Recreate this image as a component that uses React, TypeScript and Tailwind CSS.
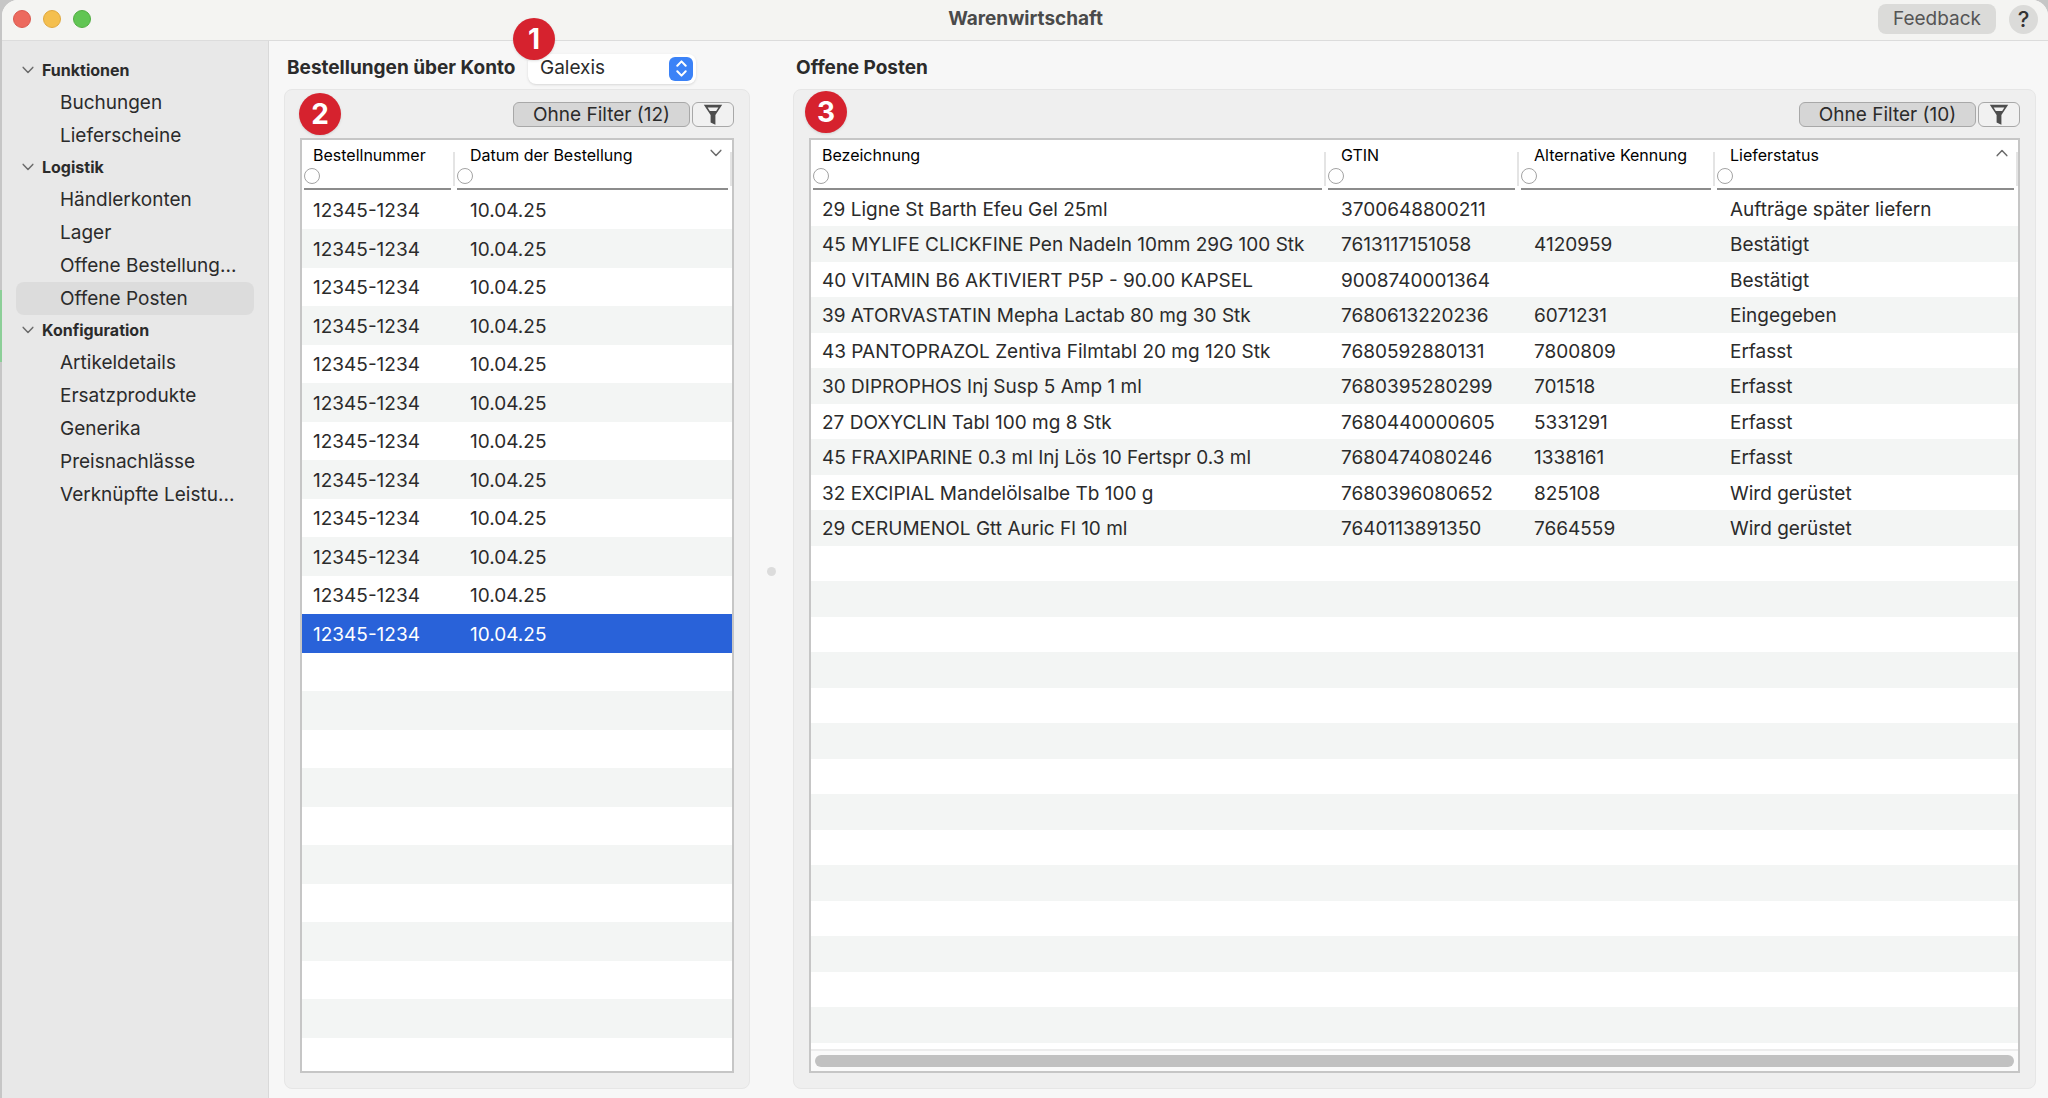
import type { ReactNode } from 'react';

const navigation = [
  {
    title: 'Funktionen',
    items: ['Buchungen', 'Lieferscheine']
  },
  {
    title: 'Logistik',
    items: ['Händlerkonten', 'Lager', 'Offene Bestellung...', 'Offene Posten']
  },
  {
    title: 'Konfiguration',
    items: ['Artikeldetails', 'Ersatzprodukte', 'Generika', 'Preisnachlässe', 'Verknüpfte Leistu...']
  }
];

const orders = Array.from({ length: 12 }, () => ['12345-1234', '10.04.25']);

const openItems = [
  ['29 Ligne St Barth Efeu Gel 25ml', '3700648800211', '', 'Aufträge später liefern'],
  ['45 MYLIFE CLICKFINE Pen Nadeln 10mm 29G 100 Stk', '7613117151058', '4120959', 'Bestätigt'],
  ['40 VITAMIN B6 AKTIVIERT P5P - 90.00 KAPSEL', '9008740001364', '', 'Bestätigt'],
  ['39 ATORVASTATIN Mepha Lactab 80 mg 30 Stk', '7680613220236', '6071231', 'Eingegeben'],
  ['43 PANTOPRAZOL Zentiva Filmtabl 20 mg 120 Stk', '7680592880131', '7800809', 'Erfasst'],
  ['30 DIPROPHOS Inj Susp 5 Amp 1 ml', '7680395280299', '701518', 'Erfasst'],
  ['27 DOXYCLIN Tabl 100 mg 8 Stk', '7680440000605', '5331291', 'Erfasst'],
  ['45 FRAXIPARINE 0.3 ml Inj Lös 10 Fertspr 0.3 ml', '7680474080246', '1338161', 'Erfasst'],
  ['32 EXCIPIAL Mandelölsalbe Tb 100 g', '7680396080652', '825108', 'Wird gerüstet'],
  ['29 CERUMENOL Gtt Auric Fl 10 ml', '7640113891350', '7664559', 'Wird gerüstet']
];

const Chevron = ({ up = false, bold = false, className = '' }: { up?: boolean; bold?: boolean; className?: string }) => (
  <svg viewBox="0 0 12 8" fill="none" stroke="currentColor" strokeLinecap="round" strokeLinejoin="round" className={className} aria-hidden="true">
    <path d={up ? 'M1.2 6.6 6 1.6l4.8 5' : 'M1.2 1.4 6 6.4l4.8-5'} strokeWidth={bold ? 2.3 : 1.5} />
  </svg>
);

const Badge = ({ children, className }: { children: ReactNode; className: string }) => (
  <span className={`absolute z-10 flex size-[42px] items-center justify-center rounded-full bg-[#d6222e] text-[28px] leading-none font-bold text-white shadow-sm ${className}`}>
    {children}
  </span>
);

const FilterBar = ({ count }: { count: number }) => (
  <div className="mb-[11px] flex justify-end gap-[2px]">
    <button className="h-[25px] w-[177px] rounded-md border border-[#a8a8a8] bg-[#d6d6d6] text-[19px] leading-[20px] text-[#2b2b2b]">
      Ohne Filter ({count})
    </button>
    <button aria-label="Filter" className="flex h-[25px] w-[42px] items-center justify-center rounded-md border border-[#a8a8a8] bg-[#f1f1f1]">
      <svg viewBox="0 0 20 21" className="h-[21px] w-5" aria-hidden="true">
        <path d="M.8.8h18.4L12.4 11v9.8l-4.8-2.4V11Z" fill="#4d4d4d" />
        <path d="M4.6 3.4h10.8l-2.2 3.6H6.8Z" fill="#f1f1f1" />
      </svg>
    </button>
  </div>
);

type Column = { label: string; width: string; sort?: 'up' | 'down' };

type GridProps = {
  name: string;
  columns: Column[];
  rows: string[][];
  total: number;
  rowClass: string;
  selected?: number;
};

const DataGrid = ({ name, columns, rows, total, rowClass, selected }: GridProps) => {
  // blank rows keep the stripes going down to the bottom of the list
  const filled = Array.from({ length: total }, (_, i) => rows[i] ?? columns.map(() => ''));

  return (
    <table aria-label={name} className="w-full table-fixed border-collapse text-left">
      <thead>
        <tr>
          {columns.map((column) => (
            <th key={column.label} scope="col" className={`group h-[51px] px-0 pt-0 pb-[1px] align-bottom font-normal text-black ${column.width}`}>
              <div className="flex items-end gap-[2px]">
                <div className="ml-[2px] h-[45px] min-w-0 flex-1 border-b-2 border-[#8c8c8c]">
                  <div className="flex h-[23px] items-start pl-[13px] group-first:pl-[9px]">
                    <span className="flex-1 text-[16px] leading-5">{column.label}</span>
                    {column.sort && <Chevron up={column.sort === 'up'} className="mt-1 mr-[6px] h-2 w-3 text-[#6b6b6b]" />}
                  </div>
                  <input type="radio" name={name} aria-label={`${column.label} filtern`} className="block size-4 appearance-none rounded-full border border-[#a3a3a3] bg-white" />
                </div>
                <span className="mb-1 h-[34px] w-[2px] bg-[#e4e4e4]" />
              </div>
            </th>
          ))}
        </tr>
      </thead>
      <tbody>
        {filled.map((row, index) => (
          <tr key={index} className={index === selected ? `${rowClass} bg-[#2962d9] text-white` : `${rowClass} text-[#2b2b2b] even:bg-[#f3f5f4]`}>
            {row.map((cell, i) => (
              <td key={i} className="truncate pt-[2px] pr-0 pb-0 pl-[15px] text-[19px] leading-6 first:pl-[11px]">
                {cell}
              </td>
            ))}
          </tr>
        ))}
      </tbody>
    </table>
  );
};

const Sidebar = () => (
  <nav className="w-[267px] shrink-0 border-r border-[#d9d9d9] bg-[#e8e8e8] px-[14px] pt-[14px] text-[#2b2b2b]">
    {navigation.map((group) => (
      <section key={group.title}>
        <h2 className="flex h-[31px] items-center gap-2 pb-[2px] pl-[6px] text-[16px] font-bold">
          <Chevron className="h-2 w-3 text-[#6b6b6b]" />
          {group.title}
        </h2>
        <ul>
          {group.items.map((item) => (
            <li key={item}>
              <a
                href="#"
                className={`flex h-[33px] items-center rounded-lg pt-[1px] pl-11 text-[19px] whitespace-nowrap ${item === 'Offene Posten' ? 'bg-[#dcdcdc]' : ''}`}
              >
                {item}
              </a>
            </li>
          ))}
        </ul>
      </section>
    ))}
  </nav>
);

const App = () => {
  return (
    <div className="flex h-screen bg-[#c6c6c6] font-['Inter','Liberation_Sans',sans-serif]">
      {/* Edge of the window behind */}
      <div className="flex w-[2px] flex-col">
        <div className="h-[290px]" />
        <div className="h-[72px] bg-[#8ccf98]" />
      </div>

      <div className="flex min-w-0 flex-1 flex-col overflow-hidden rounded-t-2xl bg-[#f7f7f7]">
        {/* Title bar */}
        <header className="grid h-[41px] shrink-0 grid-cols-3 items-center border-b border-[#dcdcdc] bg-[#f4f4f2] pr-[10px] pb-[2px] pl-[11px]">
          <div className="flex gap-3">
            <button aria-label="Schliessen" className="size-[18px] rounded-full border border-[#d95a50] bg-[#ec6a5e]" />
            <button aria-label="Minimieren" className="size-[18px] rounded-full border border-[#dfa83f] bg-[#f4bf4f]" />
            <button aria-label="Maximieren" className="size-[18px] rounded-full border border-[#52ad43] bg-[#61c554]" />
          </div>
          <h1 className="text-center text-[19px] font-bold text-[#4a4a4a]">Warenwirtschaft</h1>
          <div className="flex items-center justify-end gap-[13px]">
            <button className="h-[30px] w-[118px] rounded-lg bg-[#dbdbd9] text-[19px] text-[#555555]">Feedback</button>
            <button aria-label="Hilfe" className="size-[29px] rounded-full bg-[#dbdbd9] text-[22px] leading-none font-medium text-[#333333]">
              ?
            </button>
          </div>
        </header>

        <div className="flex min-h-0 flex-1">
          <Sidebar />

          <main className="flex min-w-0 flex-1 pr-3 pb-[9px] pl-[15px]">
            {/* Orders */}
            <section className="flex w-[466px] shrink-0 flex-col">
              <div className="flex h-12 items-center pt-[7px] pl-[3px]">
                <label htmlFor="account" className="w-[241px] text-[19px] font-bold whitespace-nowrap text-[#2b2b2b]">
                  Bestellungen über Konto
                </label>
                <div className="relative">
                  <select id="account" className="h-[30px] w-[168px] appearance-none rounded-lg bg-white pl-3 text-[19px] text-[#2b2b2b] shadow">
                    <option>Galexis</option>
                  </select>
                  <span className="pointer-events-none absolute top-[3px] right-[3px] flex size-6 flex-col items-center justify-center gap-[3px] rounded-md bg-[#3b82f7] text-white">
                    <Chevron up bold className="h-[7px] w-[11px]" />
                    <Chevron bold className="h-[7px] w-[11px]" />
                  </span>
                  <Badge className="-top-9 -left-[15px]">1</Badge>
                </div>
              </div>
              <div className="relative flex min-h-0 flex-1 flex-col rounded-lg border border-[#e6e6e6] bg-[#efefef] px-[15px] pt-3 pb-[15px]">
                <Badge className="top-[3px] left-[14px]">2</Badge>
                <FilterBar count={12} />
                <div className="min-h-0 flex-1 overflow-hidden border-2 border-[#c6c6c6] bg-white">
                  <DataGrid
                    name="Bestellungen"
                    columns={[
                      { label: 'Bestellnummer', width: 'w-[153px]' },
                      { label: 'Datum der Bestellung', width: '', sort: 'down' }
                    ]}
                    rows={orders}
                    total={23}
                    rowClass="odd:h-[38px] even:h-[39px]"
                    selected={11}
                  />
                </div>
              </div>
            </section>

            {/* Splitter */}
            <div className="flex w-[43px] shrink-0 items-center justify-center pt-3">
              <span className="size-[9px] rounded-full bg-[#dcdcdc]" />
            </div>

            {/* Open items */}
            <section className="flex min-w-0 flex-1 flex-col">
              <h2 className="flex h-12 items-center pt-[7px] pl-[3px] text-[19px] font-bold text-[#2b2b2b]">Offene Posten</h2>
              <div className="relative flex min-h-0 flex-1 flex-col rounded-lg border border-[#e6e6e6] bg-[#efefef] px-[15px] pt-3 pb-[15px]">
                <Badge className="top-[1px] left-[11px]">3</Badge>
                <FilterBar count={10} />
                <div className="flex min-h-0 flex-1 flex-col border-2 border-[#c6c6c6] bg-white">
                  <div className="min-h-0 flex-1 overflow-hidden">
                    <DataGrid
                      name="Offene Posten"
                      columns={[
                        { label: 'Bezeichnung', width: 'w-[515px]' },
                        { label: 'GTIN', width: 'w-[193px]' },
                        { label: 'Alternative Kennung', width: 'w-[196px]' },
                        { label: 'Lieferstatus', width: '', sort: 'up' }
                      ]}
                      rows={openItems}
                      total={25}
                      rowClass="odd:h-[35px] even:h-[36px]"
                    />
                  </div>
                  <div className="border-t-2 border-[#ececec] bg-[#fafafa] px-1 py-1">
                    <div className="h-3 rounded-full bg-[#c1c1c1]" />
                  </div>
                </div>
              </div>
            </section>
          </main>
        </div>
      </div>
    </div>
  );
};

export default App;
